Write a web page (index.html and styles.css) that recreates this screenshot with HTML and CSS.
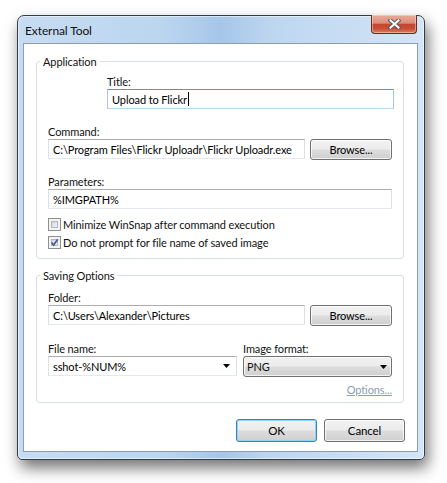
FILE: index.html
```html
<!DOCTYPE html>
<html lang="en">
<head>
  <meta charset="UTF-8" />
  <meta name="viewport" content="width=device-width, initial-scale=1.0" />
  <title>External Tool</title>
  <link rel="stylesheet" href="styles.css">
</head>
<body>
  <div class="window">
    <div class="titlebar">
      <span class="caption">External Tool</span>
      <button class="close" title="Close">
        <svg width="13" height="10" viewBox="0 0 13 10">
          <path d="M2.5 1.5 L10.5 8.5 M10.5 1.5 L2.5 8.5" stroke="#555a60" stroke-width="4" stroke-linecap="square" fill="none"/>
          <path d="M2.5 1.5 L10.5 8.5 M10.5 1.5 L2.5 8.5" stroke="#fff" stroke-width="2" stroke-linecap="square" fill="none"/>
        </svg>
      </button>
    </div>

    <div class="client">
      <div class="group group-app">
        <span class="group-title">Application</span>

        <div class="field field-title">
          <label for="title">Title:</label>
          <div class="textbox focused">Upload to Flickr<span class="caret"></span></div>
        </div>

        <div class="field field-gap">
          <label for="command">Command:</label>
          <div class="line">
            <input type="text" id="command" class="textbox path" value="C:\Program Files\Flickr Uploadr\Flickr Uploadr.exe">
            <button class="btn btn-browse">Browse...</button>
          </div>
        </div>

        <div class="field field-gap2">
          <label for="params">Parameters:</label>
          <input type="text" id="params" class="textbox wide" value="%IMGPATH%">
        </div>

        <div class="checks">
          <div class="check-row">
            <span class="check"><span class="check-box"></span></span>
            <span>Minimize WinSnap after command execution</span>
          </div>
          <div class="check-row">
            <span class="check"><span class="check-box"></span>
              <svg class="tick" width="11" height="11" viewBox="0 0 11 11">
                <path d="M2.5 5.5 L4.6 8 L8.8 2.3" stroke="#4b5f96" stroke-width="1.8" fill="none"/>
              </svg>
            </span>
            <span>Do not prompt for file name of saved image</span>
          </div>
        </div>
      </div>

      <div class="group group-save">
        <span class="group-title">Saving Options</span>

        <div class="field field-folder">
          <label for="folder">Folder:</label>
          <div class="line">
            <input type="text" id="folder" class="textbox path" value="C:\Users\Alexander\Pictures">
            <button class="btn btn-browse">Browse...</button>
          </div>
        </div>

        <div class="combo-grid">
          <div class="field">
            <label for="filename">File name:</label>
            <div class="combo">
              <input type="text" id="filename" value="sshot-%NUM%">
              <svg class="arrow" width="7" height="4" viewBox="0 0 7 4"><path d="M0 0h7L3.5 4z"/></svg>
            </div>
          </div>
          <div class="field">
            <label>Image format:</label>
            <div class="dropdown">
              <span>PNG</span>
              <svg class="arrow" width="7" height="4" viewBox="0 0 7 4"><path d="M0 0h7L3.5 4z"/></svg>
            </div>
          </div>
        </div>

        <div class="options"><a href="#">Options...</a></div>
      </div>

      <div class="buttons">
        <button class="btn btn-dialog btn-default">OK</button>
        <button class="btn btn-dialog">Cancel</button>
      </div>
    </div>
  </div>
</body>
</html>
```

FILE: styles.css
```css
* { box-sizing: border-box; }
body { margin: 0; width: 447px; height: 483px; background: #fff; font-family: Lato, "Noto Sans", sans-serif; font-size: 11px; letter-spacing: -0.1px; color: #111; overflow: hidden; }

/* window frame */
.window {
  margin: 15px 0 0 17px; width: 408px; height: 445px;
  display: flex; flex-direction: column;
  padding: 0 6px 7px 5px;
  border: 1px solid #333d4a; border-radius: 7px 7px 5px 5px;
  background: linear-gradient(to right, #c6dcf2 0%, #bcd6f0 35%, #a6c6e9 50%, #bdd6f0 62%, #d3e5f7 100%);
  box-shadow: inset 0 0 0 1px rgba(255,255,255,.55), 3px 8px 15px rgba(0,0,0,.55);
}
.titlebar { height: 27px; display: flex; justify-content: space-between; align-items: flex-start; }
.caption { padding: 7px 0 0 2px; line-height: 15px; font-size: 12px; color: #111; }
.close {
  width: 46px; height: 19px; margin: -1px 1px 0 0; padding: 0;
  border: 1px solid #6a2a1f; border-top: none; border-radius: 0 0 4px 4px;
  background: linear-gradient(#e9ab9a 0%, #dc8e7b 45%, #c5452e 52%, #c84f37 75%, #dc7c60 100%);
  box-shadow: inset 0 0 0 1px rgba(255,230,220,.45);
  display: flex; align-items: center; justify-content: center;
}

.client {
  flex: 1; background: #fff;
  border: 1px solid #8b9db2;
  padding: 17px 0 0 12px;
}

/* group boxes */
.group { position: relative; width: 368px; border: 1px solid #d5dfe5; border-radius: 3px; padding: 0 0 0 11px; }
.group-app { height: 198px; padding-top: 12px; }
.group-save { height: 128px; margin-top: 16px; padding-top: 14px; }
.group-title { position: absolute; left: 3px; top: -8px; padding: 0 3px; background: #fff; line-height: 15px; }

label { display: block; line-height: 15px; height: 15px; }
.field-title { margin-left: 59px; }
.field-gap { margin-top: 15px; }
.field-gap2 { margin-top: 14px; }
.line { display: flex; gap: 5px; }

/* text boxes */
.textbox {
  height: 20px; padding: 0 4px; font: inherit; letter-spacing: inherit; color: #000;
  border: 1px solid #dbdfe6; border-top-color: #abadb3; border-bottom-color: #e3e9ef;
  outline: none;
}
.focused {
  width: 287px; display: flex; align-items: center;
  border-color: #a4c9e3; border-top-color: #5d93c4; border-bottom-color: #b7d9ed;
}
.caret { width: 1px; height: 14px; background: #000; margin-left: 1px; }
.path { width: 257px; }
.wide { width: 344px; }

/* buttons */
.btn {
  font: inherit; letter-spacing: inherit; color: #000; padding: 0;
  border: 1px solid #707070; border-radius: 3px;
  background: linear-gradient(#f2f2f2 0%, #ebebeb 48%, #dddddd 52%, #cfcfcf 100%);
  box-shadow: inset 0 0 0 1px rgba(255,255,255,.75);
}
.btn-browse { width: 82px; height: 21px; }
.btn-dialog { width: 81px; height: 23px; font-size: 11.5px; }
.btn-default { border-color: #3c7fb1; box-shadow: inset 0 0 0 1px #8fd6f5; }

/* check boxes */
.checks { margin-top: 6px; }
.check-row { display: flex; align-items: center; gap: 2px; height: 18px; }
.check { position: relative; width: 13px; height: 13px; border: 1px solid #8e8f8f; background: #f4f4f4; padding: 2px; }
.check-box { display: block; width: 7px; height: 7px; border: 1px solid #b4b8be; background: linear-gradient(135deg, #d0d4da, #f6f6f6); }
.tick { position: absolute; left: 0; top: 0; }

/* combos */
.combo-grid { display: grid; grid-template-columns: 189px 149px; gap: 6px; margin-top: 15px; }
.combo {
  display: flex; align-items: center; height: 20px; padding: 0 6px 0 4px;
  border: 1px solid #dbdfe6; border-top-color: #abadb3; border-bottom-color: #e3e9ef;
}
.combo input { flex: 1; min-width: 0; border: none; padding: 0; font: inherit; letter-spacing: inherit; color: #000; outline: none; }
.dropdown {
  display: flex; align-items: center; justify-content: space-between; height: 21px; padding: 0 4px 0 3px;
  border: 1px solid #707070; border-radius: 3px;
  background: linear-gradient(#f2f2f2 0%, #ebebeb 48%, #dddddd 52%, #cfcfcf 100%);
  box-shadow: inset 0 0 0 1px rgba(255,255,255,.75);
}
.arrow { flex: none; }

.options { margin-top: 5px; width: 344px; text-align: right; line-height: 15px; }
.options a { color: #8c9db6; }

.buttons { display: flex; justify-content: flex-end; gap: 7px; margin-top: 16px; padding-right: 12px; }
```
